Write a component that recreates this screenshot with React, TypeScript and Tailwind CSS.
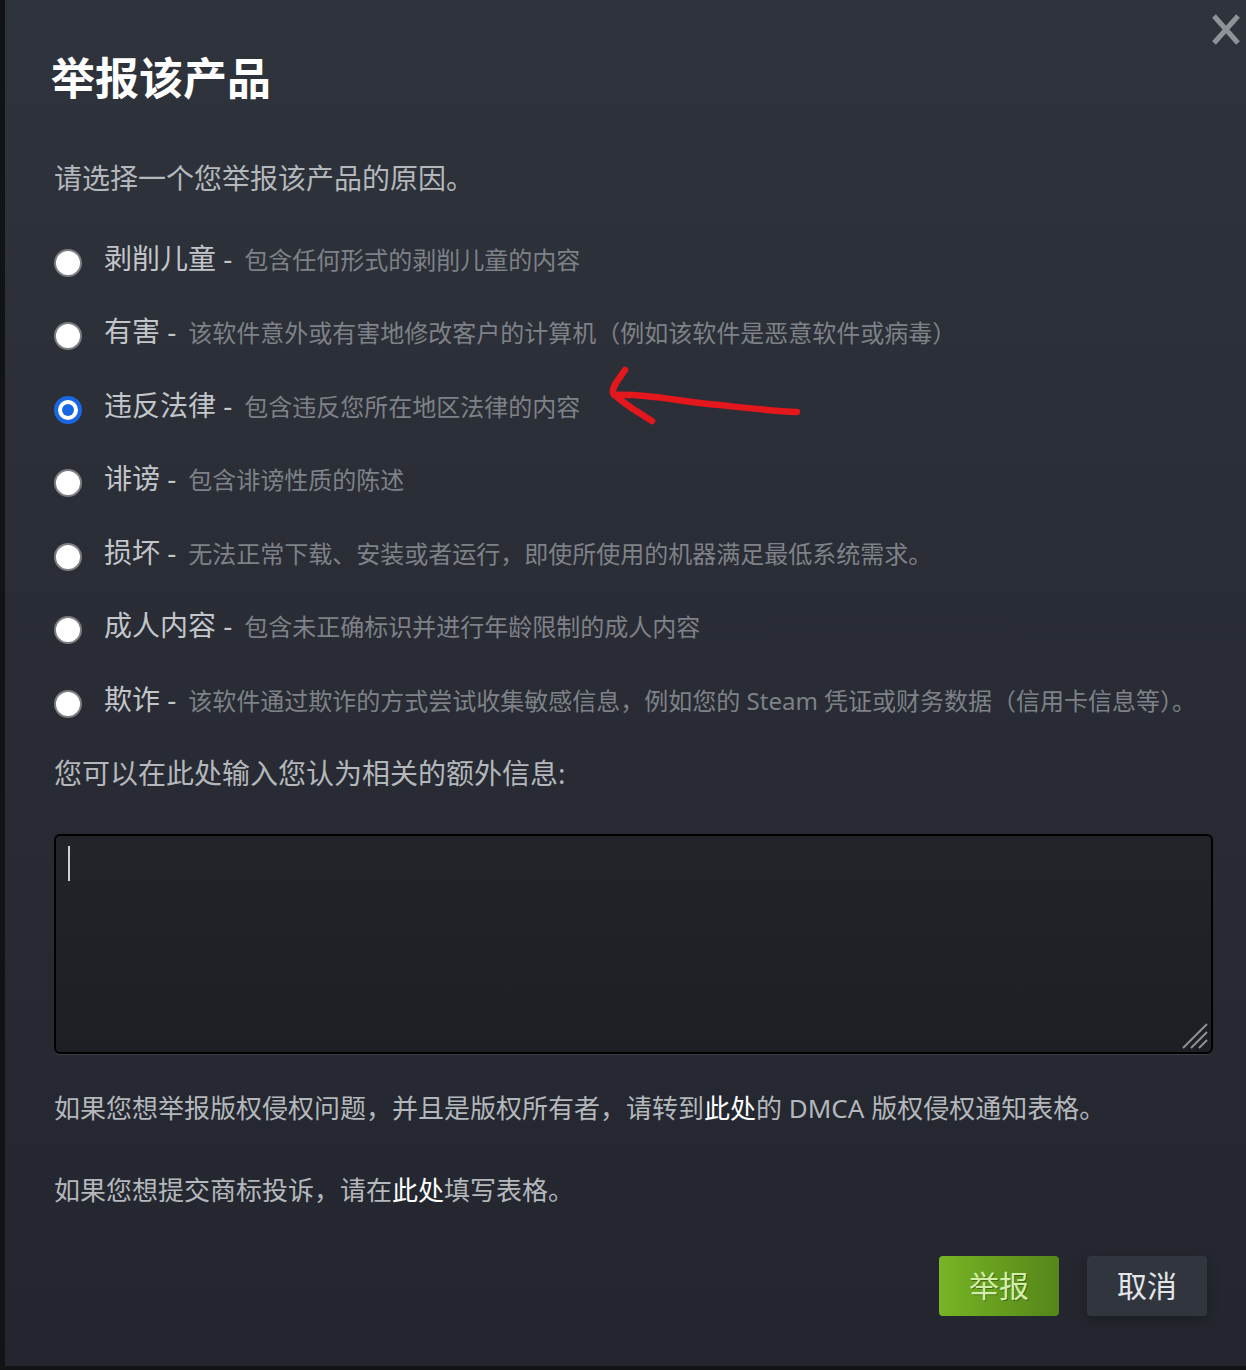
import React from 'react'

type Reason = { label: string; desc: string; checked?: boolean }

const reasons: Reason[] = [
  { label: '剥削儿童', desc: '包含任何形式的剥削儿童的内容' },
  { label: '有害', desc: '该软件意外或有害地修改客户的计算机（例如该软件是恶意软件或病毒）' },
  { label: '违反法律', desc: '包含违反您所在地区法律的内容', checked: true },
  { label: '诽谤', desc: '包含诽谤性质的陈述' },
  { label: '损坏', desc: '无法正常下载、安装或者运行，即使所使用的机器满足最低系统需求。' },
  { label: '成人内容', desc: '包含未正确标识并进行年龄限制的成人内容' },
  { label: '欺诈', desc: '该软件通过欺诈的方式尝试收集敏感信息，例如您的 Steam 凭证或财务数据（信用卡信息等）。' },
]

function Radio({ checked }: { checked?: boolean }) {
  if (checked) {
    return (
      <div className="w-[28px] h-[28px] shrink-0 rounded-full border-[4px] border-[#1a67e3] bg-white flex items-center justify-center">
        <div className="w-[12px] h-[12px] rounded-full bg-[#1a67e3]" />
      </div>
    )
  }
  return <div className="w-[28px] h-[28px] shrink-0 rounded-full border-[2px] border-[#7d7d83] bg-white" />
}

export default function App() {
  return (
    <div className="w-[1246px] h-[1370px] bg-[#121314] pl-[5px] font-['Noto_Sans','Noto_Sans_CJK_SC',sans-serif] overflow-hidden">
      <div className="relative h-[1366px] bg-gradient-to-b from-[#2f333b] via-[#292c34] to-[#23262e] pl-[49px] pr-[33px] pt-[52px]">
        {/* close */}
        <svg className="absolute left-[1202px] top-[11px] blur-[0.7px]" width="36" height="36" viewBox="0 0 36 36">
          <path d="M7 5 L31 32 M31 5 L7 32" stroke="#8e9299" strokeWidth="5" strokeLinecap="butt" />
        </svg>

        {/* red annotation arrow */}
        <svg className="absolute left-[595px] top-[355px]" width="220" height="80" viewBox="0 0 220 80">
          <path
            d="M25 15 C19 24 12 31 13 38 C24 50 40 58 52 66 M14 40 C40 39 62 43 100 48 C140 52 170 56 197 57"
            stroke="#e3171c"
            strokeWidth="6.5"
            fill="none"
            strokeLinecap="round"
            strokeLinejoin="round"
          />
        </svg>

        <h1 className="-ml-[3px] text-[44px] leading-[52px] font-bold text-white">举报该产品</h1>

        <p className="mt-[54px] text-[28px] leading-[40px] text-[#b4b8bc]">请选择一个您举报该产品的原因。</p>

        <div className="mt-[24px] flex flex-col">
          {reasons.map((r) => (
            <div key={r.label} className="h-[73.5px] flex items-center gap-[22px] whitespace-nowrap">
              <div className="mt-[8px]">
                <Radio checked={r.checked} />
              </div>
              <div className="flex items-baseline">
                <span className="text-[28px] leading-[40px] text-[#c2c6ca]">{r.label} - </span>
                <span className="ml-[12px] text-[24px] leading-[40px] text-[#7e8288]">{r.desc}</span>
              </div>
            </div>
          ))}
        </div>

        <p className="mt-[16px] text-[28px] leading-[40px] text-[#b4b8bc]">您可以在此处输入您认为相关的额外信息:</p>

        <div className="mt-[41px] relative w-[1159px] h-[220px] rounded-[6px] border-[2px] border-black bg-gradient-to-b from-[#222429] to-[#1d1f24] shadow-[0_1px_0_#3a3f4a]">
          <div className="absolute left-[12px] top-[10px] w-[2px] h-[35px] bg-[#c8d2da]" />
          <svg className="absolute right-[2px] bottom-[2px]" width="30" height="30" viewBox="0 0 30 30">
            <path d="M28 4 L4 28 M28 12 L12 28 M28 20 L20 28" stroke="#8d9096" strokeWidth="2" />
          </svg>
        </div>

        <p className="mt-[34px] text-[26px] leading-[40px] text-[#b4b8bc] whitespace-nowrap">
          如果您想举报版权侵权问题，并且是版权所有者，请转到<span className="text-white">此处</span>的 DMCA 版权侵权通知表格。
        </p>

        <p className="mt-[42px] text-[26px] leading-[40px] text-[#b4b8bc] whitespace-nowrap">
          如果您想提交商标投诉，请在<span className="text-white">此处</span>填写表格。
        </p>

        <div className="mt-[46px] flex justify-end gap-[28px] pr-[6px]">
          <button className="w-[120px] h-[60px] rounded-[4px] bg-gradient-to-r from-[#78b424] to-[#548619] text-[30px] text-[#d2efa9] [text-shadow:1px_1px_0_rgba(0,0,0,0.35)]">
            举报
          </button>
          <button className="w-[120px] h-[60px] rounded-[4px] bg-[#31353e] text-[30px] text-[#e3e6e9] shadow-[0_4px_12px_rgba(0,0,0,0.25)]">
            取消
          </button>
        </div>
      </div>
    </div>
  )
}
